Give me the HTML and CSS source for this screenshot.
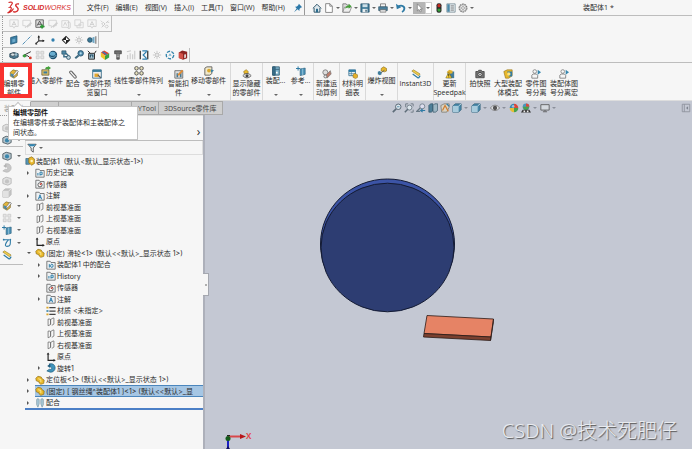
FILE: index.html
```
<!DOCTYPE html>
<html lang="zh-CN">

<head>
    <meta charset="UTF-8">
    <meta name="viewport" content="width=device-width, initial-scale=1.0">
    <title>装配体1 - SOLIDWORKS</title>

    <link rel="stylesheet" href="styles.css">
</head>

<body>

    <!-- icon sprite -->
    <svg class="sprite" xmlns="http://www.w3.org/2000/svg">
        <symbol id="home" viewBox="0 0 12 12"><path d="M1 6.500 6 1.500l5 5M2.500 6v5h7V6" fill="#dce8ee" stroke="#34586c" stroke-width="1.200"/><path d="M4.800 7h2.400v4H4.800z" fill="#2c6d8e"/></symbol>
        <symbol id="new" viewBox="0 0 12 12"><path d="M2 .8h5l3 3v7.500H2z" fill="#fff" stroke="#777"/><path d="M7 .8v3h3" fill="none" stroke="#777"/></symbol>
        <symbol id="open" viewBox="0 0 12 12"><path d="M1 1h4l1 1.500h3V11H1z" fill="#ddd" stroke="#777"/><path d="M3 5h8.500L9 11H1z" fill="#eee" stroke="#777" stroke-width=".8"/><path d="M4 7c0-3 2-4 4-4V1l3.500 3L8 7V5C6 5 5 6 4 7z" fill="#43a036"/></symbol>
        <symbol id="save" viewBox="0 0 12 12"><path d="M1 1h10v10H1z" fill="#3d7896" stroke="#1f4a60" stroke-width=".8"/><path d="M3 1.500h6v3.500H3z" fill="#cfe0e8"/><path d="M3 7h6v4H3z" fill="#e8eef0"/><path d="M6.500 8h1.500v2.500H6.500z" fill="#264d62"/></symbol>
        <symbol id="print" viewBox="0 0 12 12"><path d="M3 1h6v4H3z" fill="#f3f3f3" stroke="#555" stroke-width=".8"/><path d="M.8 4.500h10.400v4.500H.8z" fill="#4a7f9b" stroke="#31566a" stroke-width=".8"/><path d="M2.500 8h7v3h-7z" fill="#e6e6e6" stroke="#555" stroke-width=".7"/></symbol>
        <symbol id="undo" viewBox="0 0 12 12"><path d="M2.500 4.200C7 2 10.500 4 10 7c-.2 1.800-1.200 3-2.800 3.800" fill="none" stroke="#2f7ba5" stroke-width="2.200"/><path d="M0 1l1 6.500L6.200 5z" fill="#2f7ba5"/></symbol>
        <symbol id="cursor" viewBox="0 0 12 12"><path d="M4 1v8.500l2-1.800 1.300 3 1.500-.7-1.300-2.800H10z" fill="#fff" stroke="#666" stroke-width=".7"/></symbol>
        <symbol id="traffic" viewBox="0 0 12 12"><rect x="3" y=".3" width="6" height="11.400" rx="2.500" fill="#2d2d2d"/><circle cx="6" cy="3.200" r="1.900" fill="#c92a20"/><circle cx="6" cy="8.500" r="1.900" fill="#32a138"/></symbol>
        <symbol id="list" viewBox="0 0 12 12"><path d="M1 1h10v10H1z" fill="#e7eef2" stroke="#627784" stroke-width=".8"/><path d="M1.500 1.500h3v9h-3z" fill="#4a87a6"/><path d="M5.500 3.500h4M5.500 6h4M5.500 8.500h4" stroke="#555" stroke-width=".9"/></symbol>
        <symbol id="gear" viewBox="0 0 12 12"><circle cx="6" cy="6" r="4.700" fill="none" stroke="#777" stroke-width="1.300" stroke-dasharray="2.200 .7"/><circle cx="6" cy="6" r="3.700" fill="#eee" stroke="#888" stroke-width=".6"/><circle cx="6" cy="6" r="1.700" fill="#fff" stroke="#777" stroke-width=".8"/></symbol>
        <symbol id="pin" viewBox="0 0 12 12"><path d="M7 .8 11 5 9.500 5.500 7.800 7.300 7.600 9.500 5.600 7.500 1.200 11 4.400 6.500 2.500 4.500l2.200-.2L6.500 2.500z" fill="#2c78a8"/></symbol>

        <symbol id="note" viewBox="0 0 12 12"><path d="M1 1h10v8H7l-1 2-1-2H1z" fill="none" stroke="#999"/><path d="M3.500 8 6 3l2.500 5M4.500 6.500h3" fill="none" stroke="#888"/></symbol>
        <symbol id="note-pen" viewBox="0 0 12 12"><path d="M1 1.500h9V8H6l-2 2.500V8H1z" fill="none" stroke="#999"/><path d="M5 9l5.500-5.500L12 5 6.500 10.500z" fill="#999"/></symbol>
        <symbol id="note-add" viewBox="0 0 12 12"><path d="M1 1h9v9H1z" fill="#ddd" stroke="#555"/><path d="M2.500 8 5.500 2.500l3 5.500M3.500 6.300h3.800" fill="none" stroke="#444"/><path d="M8.500 6.500v5M6 9h5.500" stroke="#2d9b35" stroke-width="2"/></symbol>
        <symbol id="note-clip" viewBox="0 0 12 12"><path d="M1 2h8v8H1z" fill="none" stroke="#999"/><path d="M3 8l2-4 2 4M8 5c0-2 3-2 3 0v5c0 2-3 2-3 0" fill="none" stroke="#888"/></symbol>
        <symbol id="note-stack" viewBox="0 0 12 12"><path d="M1 1h7v7H1zM3.500 8v2.500H11V4H8" fill="none" stroke="#999"/><circle cx="7" cy="7" r="2" fill="#aaa"/></symbol>
        <symbol id="link" viewBox="0 0 12 12"><path d="M5 7 2 10M7 5l3-3M2 6l2-2 2 2-2 2zM6 9l2-2 2 2-2 2zM1 2l2 2M9 4h2" fill="none" stroke="#888" stroke-width="1.100"/></symbol>
        <symbol id="plane-blue" viewBox="0 0 12 12"><path d="M2 3 9.500 1v8L2 11z" fill="#3c7fa6" stroke="#245a7a"/><path d="M4 5l3.500-.8v4L4 9z" fill="#6da9c8"/></symbol>
        <symbol id="axis" viewBox="0 0 12 12"><path d="M.8 11.200 11.200.8" stroke="#337ca8" stroke-dasharray="5 1 1 1"/></symbol>
        <symbol id="coord" viewBox="0 0 12 12"><path d="M4.500 1v6L1 10.500M4.500 7H11" fill="none" stroke="#333" stroke-width="1.300"/><path d="M3 3l1.500-2.500L6 3zM9 5.500 11.500 7 9 8.500zM.5 9l0 2.500H3z" fill="#222"/></symbol>
        <symbol id="dot" viewBox="0 0 12 12"><circle cx="6" cy="6" r="2" fill="#2f7fae"/></symbol>
        <symbol id="mass" viewBox="0 0 12 12"><path d="M6 .8 11.200 6 6 11.200.8 6z" fill="#222"/><path d="M6 6V2.500L9.500 6zM6 6v3.500L2.500 6z" fill="#fff"/></symbol>
        <symbol id="star" viewBox="0 0 12 12"><path d="M6 1v10M1 6h10M2.500 2.500l7 7M9.500 2.500l-7 7" stroke="#888" stroke-width="1.200"/><circle cx="6" cy="6" r="2" fill="#ccc" stroke="#888"/></symbol>
        <symbol id="mirror" viewBox="0 0 12 12"><circle cx="3.500" cy="6" r="2.800" fill="#3a7998" stroke="#264e64"/><path d="M6.500 3 9 2v8L6.500 9z" fill="#6da6c4"/><path d="M10 1.500h1.200v9H10z" fill="#666"/></symbol>
        <symbol id="cyl" viewBox="0 0 12 12"><path d="M1 4.500 6 3l5 1.500v4L6 10.500 1 8.500z" fill="#4c7b92" stroke="#2d4b5b"/><ellipse cx="4.500" cy="5.500" rx="2.500" ry="1.800" fill="#d5e2e8" stroke="#333" stroke-width=".6"/><circle cx="8.500" cy="5.500" r="1.500" fill="#9fc0ce"/></symbol>
        <symbol id="branch" viewBox="0 0 12 12"><path d="M1 7 10.500 2M1 7h6l3 3" fill="none" stroke="#333" stroke-width="1.200"/><circle cx="3" cy="7" r="2" fill="#38a03a"/><circle cx="10" cy="9.500" r="1.700" fill="#cf3b2c"/></symbol>
        <symbol id="grid" viewBox="0 0 12 12"><path d="M1.500 1.500H5V5H1.500zM7 1.500h3.500V5H7zM1.500 7H5v3.500H1.500zM7 7h3.500v3.500H7z" fill="#ccc" stroke="#888"/></symbol>
        <symbol id="sphere" viewBox="0 0 12 12"><circle cx="6" cy="6" r="5" fill="#1e4f6e"/><ellipse cx="5.500" cy="4.500" rx="3.500" ry="2.500" fill="#69adcf"/><path d="M2 8c3 2 6 1 8-2" stroke="#8cc4dc" fill="none"/></symbol>
        <symbol id="pipe" viewBox="0 0 12 12"><path d="M1 1h5v4H1z" fill="#4d88a6" stroke="#2b5266" stroke-width=".8"/><path d="M6 4l4 4M3.500 5v3H8" fill="none" stroke="#3c6e88" stroke-width="1.800"/><circle cx="9" cy="9" r="2.300" fill="#bcd4df" stroke="#2b5266"/></symbol>
        <symbol id="wrench" viewBox="0 0 12 12"><circle cx="8" cy="4" r="3.300" fill="#4d8bae" stroke="#244e68"/><circle cx="8" cy="4" r="1.300" fill="#b9dbe9"/><path d="M5.500 6.500 1.500 10" stroke="#406b82" stroke-width="2.500"/></symbol>
        <symbol id="sketch" viewBox="0 0 12 12"><path d="M2 4h7v7H2zM1 1l3 3M9 4l2-3" fill="#aac5d2" stroke="#333" stroke-width="1.200"/><path d="M4 9V6h3v3" fill="none" stroke="#234f66" stroke-width="1.300"/></symbol>
        <symbol id="rainbow" viewBox="0 0 12 12"><path d="M1 3 5 .5 11 4 6 7z" fill="#d94733"/><path d="M1 3l5 4v5L1 8z" fill="#efc52e"/><path d="M6 7l5-3v5l-5 3z" fill="#39a046"/><path d="M3 2l5 3.500" stroke="#2f79c7" stroke-width="1.500"/></symbol>
        <symbol id="bolt" viewBox="0 0 12 12"><path d="M2 1h8v3.500H7.500V11h-3V4.500H2z" fill="#707070" stroke="#333" stroke-width=".8"/><path d="M4.500 6h3M4.500 8h3" stroke="#ddd" stroke-width=".8"/></symbol>
        <symbol id="bars" viewBox="0 0 12 12"><path d="M2 6v5M5 4v7M8 5v6M10.500 1v10M1 2l5-1" stroke="#888" stroke-width="1.300"/></symbol>
        <symbol id="measure" viewBox="0 0 12 12"><path d="M1.500 1v10M10.500 1v10" stroke="#333" stroke-width="1.500"/><path d="M4 1h6M4 11h6M9 2 5 6l4 4" fill="none" stroke="#2f7fae" stroke-width="1.500"/></symbol>
        <symbol id="cycle" viewBox="0 0 12 12"><circle cx="6" cy="6" r="4.500" fill="none" stroke="#3586ad" stroke-width="1.600" stroke-dasharray="4 1.600"/><path d="M4 7l2-3 2 3z" fill="#78b4ce"/></symbol>
        <symbol id="redbox" viewBox="0 0 12 12"><path d="M1 3l4-2.500L11 2v8l-5 1.800L1 9.500z" fill="#8d2523"/><path d="M1 3l5 1.500V11L1 9.500z" fill="#d35047"/><path d="M7.500 5.500 9.500 5v4l-2 .8z" fill="#e8e8e8"/></symbol>

        <symbol id="part" viewBox="0 0 12 12"><path d="M1 4 3.500 1.500l4 1 1 2 2.500 1.500-.5 4L7 11.200 5 9.500 4.500 8 1.500 7z" fill="#e9b92c" stroke="#8c6b12" stroke-width=".8"/><path d="M4 4.500l3 1v3" fill="none" stroke="#fff0a6"/></symbol>
        <symbol id="edit-part" viewBox="0 0 12 12"><path d="M1.500 4 5 1l5 1.500V8L6 11 1.500 8.500z" fill="#e4b63a" stroke="#7a6830" stroke-width=".8"/><path d="M2 5l4 1.500v4L2 8.300z" fill="#4b8eae"/><path d="M5 7 9.500 1.500 11.300 3 7 8l-2.500.8z" fill="#f1f1f1" stroke="#555" stroke-width=".7"/></symbol>
        <symbol id="asm" viewBox="0 0 12 12"><path d="M1 3h4.500v7H1z" fill="#5795b4" stroke="#28556d" stroke-width=".7"/><path d="M4.500 2.500 8 1l3.300 2.500V9L8 11 4.500 8z" fill="#e8b72c" stroke="#89681a" stroke-width=".8"/><circle cx="8" cy="6" r="1.500" fill="#fff3bd"/></symbol>
        <symbol id="insert" viewBox="0 0 12 12"><path d="M1 4.500h8.500V11H1z" fill="#dec068" stroke="#554c2e" stroke-width=".8"/><path d="M3 6.500h4.500V9H3z" fill="#3d7d9d"/><path d="M5 4c0-2 1.500-3 3.500-3V0L12 2.300 8.500 5V3.500z" fill="#45a23c"/></symbol>
        <symbol id="clip" viewBox="0 0 12 12"><path d="M10 9 4.500 2.800C3.300 1.400 1 3.400 2.300 4.800L7.500 10.500c1.200 1.400 3.300-.4 2-1.800L5 3.800" fill="none" stroke="#666" stroke-width="1.300"/></symbol>
        <symbol id="preview" viewBox="0 0 12 12"><path d="M.8 1h10.400v10H.8z" fill="#eee" stroke="#326985"/><path d="M1 1h10v2.500H1z" fill="#387a9a"/><path d="M3 5.500h5v4H3z" fill="#e1a52c"/><path d="M7 7l3.500 3.500" stroke="#555" stroke-width="1.300"/></symbol>
        <symbol id="pattern" viewBox="0 0 12 12"><path d="M1 1.500l2-1 2 1V4L3 5 1 4zM7 1.500l2-1 2 1V4L9 5 7 4zM1 7.500l2-1 2 1V10l-2 1-2-1zM7 7.500l2-1 2 1V10l-2 1-2-1z" fill="#e5dfbc" stroke="#4a4a4a"/></symbol>
        <symbol id="smart" viewBox="0 0 12 12"><path d="M1 2h9.500v9H1z" fill="#ddd" stroke="#666"/><path d="M3 5h2v5H3zM7 4h2v6H7z" fill="#467991"/><path d="M4 7 9.500 1 11 2.500 6 8z" fill="#e28b31"/></symbol>
        <symbol id="move" viewBox="0 0 12 12"><path d="M1 2.500 3.500 1h6v8L7 11H1z" fill="#f1e9cb" stroke="#555"/><circle cx="6" cy="5.500" r="2.300" fill="#dba930"/><path d="M8 4l4 1.500L8.500 8z" fill="#3c82a6"/></symbol>
        <symbol id="hide" viewBox="0 0 12 12"><path d="M2 3 5 .8 7.500 3 7 6H3z" fill="#e9b92c" stroke="#8c6b12" stroke-width=".7"/><path d="M1 8c3-3.500 7-3.500 10 0-3 3.500-7 3.500-10 0z" fill="#ddd" stroke="#555"/><circle cx="6" cy="8" r="1.800" fill="#444"/></symbol>
        <symbol id="feature" viewBox="0 0 12 12"><path d="M2 1h8v10H2z" fill="#7cb2cb" stroke="#315d73"/><path d="M2 1h3v10H2zM5 4h5" fill="#376f8b" stroke="#315d73"/><path d="M6 7h2v2H6z" fill="#fff"/></symbol>
        <symbol id="ref" viewBox="0 0 12 12"><path d="M5 3.500 11 2.500v7.500l-6 1.500z" fill="#4b92b8" stroke="#2a617f" stroke-width=".8"/><path d="M0 3h5M2.500.5v5" stroke="#2e7ba4" stroke-width="1.200"/><path d="M8 3v8" stroke="#9dc6da"/></symbol>
        <symbol id="motion" viewBox="0 0 12 12"><circle cx="4" cy="4" r="3" fill="#ddd" stroke="#777"/><path d="M5 7l5-5 1 4-5 5z" fill="#bb7c6c" stroke="#777" stroke-width=".8"/><circle cx="4" cy="9" r="1.700" fill="#eee" stroke="#666"/></symbol>
        <symbol id="bom" viewBox="0 0 12 12"><path d="M1 1h8v7H1z" fill="#e6eef2" stroke="#387695"/><path d="M1 1h8v2.500H1z" fill="#2b7ca8"/><path d="M1 5.500h8M4 3v5" stroke="#387695" stroke-width=".7"/><path d="M6 7 8 5l3.500 2v3L9 11.500 6 10z" fill="#e4b02b" stroke="#82651b" stroke-width=".6"/></symbol>
        <symbol id="explode" viewBox="0 0 12 12"><path d="M5 3 8 1l3.500 2v3L9 7 5 6z" fill="#e9b92c" stroke="#806517" stroke-width=".7"/><path d="M1 7l2-1 2.500 1.500V10L3.500 11 1 10z" fill="#407d9c"/><path d="M5 8l4-3" stroke="#555"/></symbol>
        <symbol id="ruler" viewBox="0 0 12 12"><path d="M1 2.500 3 1l8 5-2 2z" fill="#f0cf48" stroke="#8d742a" stroke-width=".7"/><path d="M2 6l7 5M9 11l2-3" stroke="#2e7ba4" stroke-width="1.500"/></symbol>
        <symbol id="warn" viewBox="0 0 12 12"><path d="M3 3h8v8H3z" fill="#437c9a"/><path d="M5 1l4 1v3L5 6 2 4z" fill="#e3b22e"/><path d="M4.500 4 8 10.800H1z" fill="#ffd531" stroke="#665414" stroke-width=".6"/><path d="M4.500 6v2.500M4.500 9v1" stroke="#222"/></symbol>
        <symbol id="camera" viewBox="0 0 12 12"><path d="M1 3h2.500l1-1.500h3l1 1.500H11v7.500H1z" fill="#777" stroke="#444"/><circle cx="6" cy="6.500" r="2.500" fill="#eee" stroke="#333"/><circle cx="6" cy="6.500" r="1" fill="#555"/></symbol>
        <symbol id="big-asm" viewBox="0 0 12 12"><path d="M1 3 5 1h6v7l-4 3H3z" fill="#e9b92c" stroke="#8c6b12" stroke-width=".7"/><path d="M5 3h6v6H7z" fill="#347ca0"/><circle cx="7" cy="6" r="2" fill="#ffe37c"/></symbol>
        <symbol id="person" viewBox="0 0 12 12"><circle cx="4.500" cy="3" r="2.200" fill="#f6f6f6" stroke="#777" stroke-width=".9"/><path d="M1 11V7.500l1.500-1.500h4L8 7.500V11z" fill="#f6f6f6" stroke="#777"/><path d="M8 1l4 3-4 3z" fill="#3586ad"/></symbol>

        <symbol id="lens" viewBox="0 0 12 12"><circle cx="7.500" cy="4.500" r="3.300" fill="#dce6ec" stroke="#5d6c78" stroke-width="1.200"/><path d="M5 7 1 11" stroke="#5d6c78" stroke-width="2"/><path d="M6 4.500h3" stroke="#4682a0"/></symbol>
        <symbol id="lens-area" viewBox="0 0 12 12"><path d="M2 5V1h3M8 1h3v3M11 8v3H8" fill="none" stroke="#66727d"/><circle cx="6.500" cy="5.500" r="3" fill="#dce6ec" stroke="#67747f"/><path d="M4.500 7.500 1 11" stroke="#5d6c78" stroke-width="1.800"/></symbol>
        <symbol id="prev-view" viewBox="0 0 12 12"><circle cx="7.500" cy="4" r="3" fill="#dde" stroke="#6b7a86"/><path d="M5 6 1 10h4" fill="none" stroke="#687885" stroke-width="1.500"/><path d="M11 9H6M8 7 5.500 9 8 11" fill="none" stroke="#2f7ba5" stroke-width="1.300"/></symbol>
        <symbol id="section" viewBox="0 0 12 12"><path d="M1 3l2-2h3v8l-2 2H1z" fill="#4d7f98" stroke="#345365" stroke-width=".8"/><path d="M6 3l2-2h3.500v8L9 11H6z" fill="#9cb6c3" stroke="#345365" stroke-width=".8"/></symbol>
        <symbol id="annot" viewBox="0 0 12 12"><path d="M1 3l4-2h6v4L8 11H2z" fill="#d8d4c5" stroke="#6f6c62" stroke-width=".8"/><path d="M3 9 6 3l4 7" fill="none" stroke="#cf7f32" stroke-width="1.500"/><path d="M8 1l3 3" stroke="#2f7ba5" stroke-width="1.500"/></symbol>
        <symbol id="cube" viewBox="0 0 12 12"><path d="M1 3.500 4 1h7v7l-3 3H1z" fill="#4788a9" stroke="#2d5a72" stroke-width=".8"/><path d="M1 3.500h7V11H1z" fill="#a8cbdc"/><path d="M8 3.500 11 1" stroke="#d6e7ef"/></symbol>
        <symbol id="eye" viewBox="0 0 12 12"><path d="M.5 6c3-4.500 8-4.500 11 0-3 4-8 4-11 0z" fill="#e3e5e8" stroke="#777"/><circle cx="6" cy="6" r="2.600" fill="#555"/></symbol>
        <symbol id="ball" viewBox="0 0 12 12"><path d="M6 .8A5.200 5.200 0 0 0 .8 6H6z" fill="#3987b0"/><path d="M6 .8A5.200 5.200 0 0 1 11.200 6H6z" fill="#d7483a"/><path d="M.8 6A5.200 5.200 0 0 0 6 11.200V6z" fill="#e6bd35"/><path d="M11.200 6A5.200 5.200 0 0 1 6 11.200V6z" fill="#48a14b"/><circle cx="5" cy="4" r="1.600" fill="#fff" fill-opacity=".5"/></symbol>
        <symbol id="scene" viewBox="0 0 12 12"><circle cx="6" cy="4.500" r="4" fill="#4a97bd"/><path d="M6 .5a4 4 0 0 1 4 4H6z" fill="#d94a3a"/><path d="M2 4.500h8L8 8H4z" fill="#50a04a"/><path d="M0 11.500 2 8h8l2 3.500z" fill="#333"/><path d="M3 9h2v2H3zM7 9h2v2H7z" fill="#eee"/></symbol>
        <symbol id="monitor" viewBox="0 0 12 12"><path d="M1 2h10v6.500H1z" fill="#d5d9df" stroke="#555"/><path d="M6 8.500V10M3.500 10.500h5" stroke="#555"/></symbol>
        <symbol id="dock" viewBox="0 0 12 12"><path d="M1.500 1.500h9v9h-9zM4 1.500v9" fill="none" stroke="#8b909b"/><path d="M8.500 4v4L6 6z" fill="#7c828e"/></symbol>

        <symbol id="funnel" viewBox="0 0 12 12"><path d="M1 1.500h10L7.500 6v5L5 9V6z" fill="#edf3f6" stroke="#444"/><path d="M1.500 1.500h9L8.500 4h-5z" fill="#2f86b3"/></symbol>
        <symbol id="folder-h" viewBox="0 0 12 12"><path d="M1 1.500h4L6 3h5v8H1z" fill="#eef1f3" stroke="#666"/><path d="M3.500 9V6M6 9V5h2.500v3H6" fill="none" stroke="#2e7fa9" stroke-width="1.200"/></symbol>
        <symbol id="folder-s" viewBox="0 0 12 12"><path d="M1 1.500h4L6 3h5v8H1z" fill="#eef1f3" stroke="#666"/><circle cx="6" cy="7" r="2.500" fill="#fff" stroke="#444"/><path d="M6 7l2-2" stroke="#d33a2f" stroke-width="1.500"/></symbol>
        <symbol id="folder-a" viewBox="0 0 12 12"><path d="M1 1.500h4L6 3h5v8H1z" fill="#eef1f3" stroke="#666"/><path d="M4 10l2-5.500L8 10M4.800 8h2.400" fill="none" stroke="#2377a8" stroke-width="1.100"/></symbol>
        <symbol id="folder-m" viewBox="0 0 12 12"><path d="M1 1.500h4L6 3h5v8H1z" fill="#eef1f3" stroke="#666"/><path d="M4 5v4M7 5c2 0 2 4 0 4S5 5 7 5z" fill="none" stroke="#2e7fa9" stroke-width="1.200"/></symbol>
        <symbol id="plane" viewBox="0 0 12 12"><path d="M5 2.500H2.500v8l3-1.500V2.500M5.500 9V3l3-1.800h1V8.500L7 10" fill="none" stroke="#666" stroke-width=".9"/></symbol>
        <symbol id="origin" viewBox="0 0 12 12"><path d="M2.500 2v8H10" fill="none" stroke="#222" stroke-width="1.400"/><path d="M.8 3 2.500.5 4.200 3zM9 8.300l2.800 1.700L9 11.700z" fill="#222"/></symbol>
        <symbol id="material" viewBox="0 0 12 12"><path d="M4 2h7.500M4 6h7.500M4 10h7.500" stroke="#444" stroke-width="1.500"/><path d="M.5 1h2.500v2H.5zM.5 9h2.500v2H.5z" fill="#dba62b"/><path d="M.5 5h2.500v2H.5z" fill="#3a84a8"/></symbol>
        <symbol id="revolve" viewBox="0 0 12 12"><path d="M4 1c5-1 7 2 7 5s-3 5.500-6 5L1 9.500l3-2c3 1 4-2 1-3z" fill="#3f93bb" stroke="#235d7d" stroke-width=".8"/><path d="M1.500 3.500 5 1v5z" fill="#215d7f"/></symbol>
        <symbol id="mates" viewBox="0 0 12 12"><path d="M2 2c0-1.500 3-1.500 3 0v5L3.500 11 2 8zM7 2c0-1.500 3-1.500 3 0v6l-1.500 3L7 7z" fill="#a9c9d8" stroke="#7995a3" stroke-width=".8"/></symbol>
        <symbol id="solid" viewBox="0 0 12 12"><path d="M1 3.500 5 1.500l6 1.500v6l-4 2-6-2z" fill="#b9c7cf" stroke="#46545c"/><circle cx="6" cy="6.500" r="2.500" fill="#3b87ad"/></symbol>
        <symbol id="spline" viewBox="0 0 12 12"><path d="M2 2h6c-3 3-6 8-2 8 5 0 4-4 4-8" fill="none" stroke="#2f7ba5" stroke-width="1.300"/><circle cx="2" cy="2" r="1" fill="#2f7ba5"/><circle cx="10" cy="2" r="1" fill="#2f7ba5"/></symbol>
    </svg>

    <header class="titlebar">
        <div class="brand">
            <svg class="brand-mark" viewBox="0 0 26 26" aria-hidden="true">
                <path d="M3 3c6-2 9 0 7 3L6 12M3 13c7-2 8 2 1 9L1 24M1 24c6-1 10-5 12-9" fill="none" stroke="#d52b2b" stroke-width="2.400"/>
                <path d="M24 6c-5-1-8 1-6 4s6 4 4 8-7 5-10 3" fill="none" stroke="#d52b2b" stroke-width="2.800"/>
            </svg>
            <span class="brand-name"><b>SOLID</b>WORKS</span>
        </div>
        <nav class="menu">
            <button>文件(F)</button>
            <button>编辑(E)</button>
            <button>视图(V)</button>
            <button>插入(I)</button>
            <button>工具(T)</button>
            <button>窗口(W)</button>
            <button>帮助(H)</button>
            <button class="tool" aria-label="固定"><svg><use href="#pin"/></svg></button>
        </nav>
        <div class="quick">
            <button class="tool" aria-label="主页"><svg><use href="#home"/></svg></button>
            <button class="tool" aria-label="新建"><svg><use href="#new"/></svg></button>
            <button class="drop" aria-label="新建选项"></button>
            <button class="tool" aria-label="打开"><svg><use href="#open"/></svg></button>
            <button class="drop" aria-label="打开选项"></button>
            <button class="tool" aria-label="保存"><svg><use href="#save"/></svg></button>
            <button class="drop" aria-label="保存选项"></button>
            <button class="tool" aria-label="打印"><svg><use href="#print"/></svg></button>
            <button class="drop" aria-label="打印选项"></button>
            <button class="tool" aria-label="撤销"><svg><use href="#undo"/></svg></button>
            <button class="drop" aria-label="撤销选项"></button>
            <button class="tool pressed" aria-label="选择"><svg><use href="#cursor"/></svg></button>
            <button class="drop framed" aria-label="选择选项"></button>
            <button class="tool" aria-label="重建模型"><svg><use href="#traffic"/></svg></button>
            <button class="tool" aria-label="文件属性"><svg><use href="#list"/></svg></button>
            <button class="tool" aria-label="选项"><svg><use href="#gear"/></svg></button>
            <button class="drop" aria-label="更多选项"></button>
        </div>
        <h1 class="doc-title">装配体1 *</h1>
    </header>

    <div class="toolbars">
        <div class="toolbar">
            <button class="tool faded" aria-label="注解"><svg><use href="#note"/></svg></button>
            <button class="tool faded" aria-label="编辑注解"><svg><use href="#note-pen"/></svg></button>
            <button class="tool" aria-label="添加注解"><svg><use href="#note-add"/></svg></button>
            <button class="tool faded" aria-label="附加注解"><svg><use href="#note-pen"/></svg></button>
            <button class="tool faded" aria-label="附件"><svg><use href="#note-clip"/></svg></button>
            <button class="tool faded" aria-label="注解组"><svg><use href="#note-stack"/></svg></button>
            <button class="tool faded" aria-label="注解框"><svg><use href="#note"/></svg></button>
            <button class="tool faded" aria-label="链接"><svg><use href="#link"/></svg></button>
        </div>
        <div class="toolbar">
            <button class="tool" aria-label="基准面"><svg><use href="#plane-blue"/></svg></button>
            <button class="tool" aria-label="基准轴"><svg><use href="#axis"/></svg></button>
            <button class="tool" aria-label="坐标系"><svg><use href="#coord"/></svg></button>
            <button class="tool" aria-label="点"><svg><use href="#dot"/></svg></button>
            <button class="tool" aria-label="质心"><svg><use href="#mass"/></svg></button>
            <button class="tool faded" aria-label="边界框"><svg><use href="#star"/></svg></button>
            <button class="tool" aria-label="配合参考"><svg><use href="#mirror"/></svg></button>
        </div>
        <div class="toolbar">
            <button class="tool" aria-label="干涉检查"><svg><use href="#cyl"/></svg></button>
            <button class="tool" aria-label="间隙验证"><svg><use href="#branch"/></svg></button>
            <button class="tool faded" aria-label="孔对齐"><svg><use href="#grid"/></svg></button>
            <button class="tool" aria-label="质量属性"><svg><use href="#sphere"/></svg></button>
            <button class="tool" aria-label="剖面属性"><svg><use href="#pipe"/></svg></button>
            <button class="tool" aria-label="传感器"><svg><use href="#wrench"/></svg></button>
            <button class="tool" aria-label="草图"><svg><use href="#sketch"/></svg></button>
            <button class="tool" aria-label="曲率"><svg><use href="#rainbow"/></svg></button>
            <button class="tool" aria-label="螺栓"><svg><use href="#bolt"/></svg></button>
            <button class="tool faded" aria-label="统计"><svg><use href="#bars"/></svg></button>
            <button class="tool" aria-label="测量"><svg><use href="#measure"/></svg></button>
            <button class="tool faded" aria-label="对称检查"><svg><use href="#star"/></svg></button>
            <button class="tool" aria-label="比较文档"><svg><use href="#cycle"/></svg></button>
            <button class="tool" aria-label="检查"><svg><use href="#redbox"/></svg></button>
        </div>
    </div>

    <div class="ribbon">
        <div class="group first">
            <button class="cmd active"><svg><use href="#edit-part"/></svg><span>编辑零<br>部件</span></button>
            <button class="cmd w-35 menu-cmd"><svg><use href="#insert"/></svg><span>插入零部件</span><i class="caret"></i></button>
            <button class="cmd w-20"><svg><use href="#clip"/></svg><span>配合</span></button>
            <button class="cmd w-28"><svg><use href="#preview"/></svg><span>零部件预<br>览窗口</span></button>
            <button class="cmd w-55 menu-cmd"><svg><use href="#pattern"/></svg><span>线性零部件阵列</span><i class="caret"></i></button>
            <button class="cmd w-25"><svg><use href="#smart"/></svg><span>智能扣<br>件</span></button>
            <button class="cmd w-35 menu-cmd"><svg><use href="#move"/></svg><span>移动零部件</span><i class="caret"></i></button>
        </div>
        <div class="group">
            <button class="cmd w-31"><svg><use href="#hide"/></svg><span>显示隐藏<br>的零部件</span></button>
        </div>
        <div class="group">
            <button class="cmd w-25 menu-cmd"><svg><use href="#feature"/></svg><span>装配...</span><i class="caret"></i></button>
            <button class="cmd w-25 menu-cmd"><svg><use href="#ref"/></svg><span>参考...</span><i class="caret"></i></button>
        </div>
        <div class="group">
            <button class="cmd w-25"><svg><use href="#motion"/></svg><span>新建运<br>动算例</span></button>
        </div>
        <div class="group">
            <button class="cmd w-25"><svg><use href="#bom"/></svg><span>材料明<br>细表</span></button>
        </div>
        <div class="group">
            <button class="cmd w-31 menu-cmd"><svg><use href="#explode"/></svg><span>爆炸视图</span><i class="caret"></i></button>
        </div>
        <div class="group">
            <button class="cmd w-35"><svg><use href="#ruler"/></svg><span>Instant3D</span></button>
        </div>
        <div class="group">
            <button class="cmd w-31"><svg><use href="#warn"/></svg><span>更新<br>Speedpak</span></button>
        </div>
        <div class="group last">
            <button class="cmd w-28"><svg><use href="#camera"/></svg><span>拍快照</span></button>
            <button class="cmd w-28"><svg><use href="#big-asm"/></svg><span>大型装配<br>体模式</span></button>
            <button class="cmd w-28"><svg><use href="#person"/></svg><span>零件图<br>号分离</span></button>
            <button class="cmd w-28"><svg><use href="#person"/></svg><span>装配体图<br>号分离宏</span></button>
        </div>

        <div class="tooltip" role="tooltip">
            <strong>编辑零部件</strong>
            <p>在编辑零件或子装配体和主装配体之间状态。</p>
        </div>
    </div>

    <main class="workspace">
        <div class="topbar">
            <nav class="tabs">
                <button class="tab current w-31">装配体</button>
                <button class="tab w-28" aria-label="布局"></button>
                <button class="tab w-73" aria-label="草图"></button>
                <button class="tab">XYTool</button>
                <button class="tab wide">3DSource零件库</button>
            </nav>
            <div class="hud">
                <button class="tool" aria-label="整屏显示全图"><svg><use href="#lens"/></svg></button>
                <button class="tool" aria-label="局部放大"><svg><use href="#lens-area"/></svg></button>
                <button class="tool" aria-label="上一视图"><svg><use href="#prev-view"/></svg></button>
                <button class="tool" aria-label="剖面视图"><svg><use href="#section"/></svg></button>
                <button class="tool" aria-label="动态注解视图"><svg><use href="#annot"/></svg></button>
                <button class="tool" aria-label="视图定向"><svg><use href="#cube"/></svg></button>
                <button class="drop" aria-label="视图定向选项"></button>
                <button class="tool" aria-label="显示样式"><svg><use href="#cube"/></svg></button>
                <button class="drop" aria-label="显示样式选项"></button>
                <button class="tool" aria-label="隐藏所有类型"><svg><use href="#eye"/></svg></button>
                <button class="drop" aria-label="隐藏选项"></button>
                <button class="tool" aria-label="编辑外观"><svg><use href="#ball"/></svg></button>
                <button class="tool" aria-label="应用布景"><svg><use href="#scene"/></svg></button>
                <button class="drop" aria-label="布景选项"></button>
                <button class="tool" aria-label="视图设定"><svg><use href="#monitor"/></svg></button>
                <button class="drop" aria-label="视图设定选项"></button>
            </div>
            <button class="tool dock" aria-label="停靠"><svg><use href="#dock"/></svg></button>
        </div>

        <div class="content">
            <div class="side">
                <div class="side-tools side-top">
                    <button class="tool faded" aria-label="实体"><svg><use href="#solid"/></svg></button>
                    <div class="side-item">
                        <button class="tool" aria-label="视图"><svg><use href="#solid"/></svg></button>
                        <button class="drop" aria-label="视图选项"></button>
                    </div>
                </div>
                <div class="side-tools side-main">
                    <div class="side-item">
                        <button class="tool" aria-label="拉伸"><svg><use href="#solid"/></svg></button>
                        <button class="drop" aria-label="拉伸选项"></button>
                    </div>
                    <button class="tool faded" aria-label="圆角"><svg><use href="#revolve"/></svg></button>
                    <button class="tool faded" aria-label="孔"><svg><use href="#solid"/></svg></button>
                    <button class="tool faded" aria-label="抽壳"><svg><use href="#cube"/></svg></button>
                    <div class="side-item">
                        <button class="tool" aria-label="编辑"><svg><use href="#edit-part"/></svg></button>
                        <button class="drop" aria-label="编辑选项"></button>
                    </div>
                    <div class="side-item">
                        <button class="tool faded" aria-label="阵列"><svg><use href="#grid"/></svg></button>
                        <button class="drop" aria-label="阵列选项"></button>
                    </div>
                    <div class="side-item">
                        <button class="tool" aria-label="参考"><svg><use href="#ref"/></svg></button>
                        <button class="drop" aria-label="参考选项"></button>
                    </div>
                    <div class="side-item">
                        <button class="tool" aria-label="曲线"><svg><use href="#spline"/></svg></button>
                        <button class="drop" aria-label="曲线选项"></button>
                    </div>
                    <button class="tool" aria-label="Instant3D"><svg><use href="#ruler"/></svg></button>
                </div>
            </div>

            <section class="feature-panel">
                <div class="panel-head">
                    <div class="panel-tabs"><i></i><i></i><i></i><i></i></div>
                    <button class="more" aria-label="更多">›</button>
                </div>
                <div class="filter">
                    <button class="tool" aria-label="过滤"><svg><use href="#funnel"/></svg></button>
                    <i class="caret"></i>
                </div>
                <ul class="tree">
                    <li class="row"><svg><use href="#asm"/></svg><span>装配体1&nbsp; (默认&lt;默认_显示状态-1&gt;)</span></li>
                    <li class="row level-1"><button class="twist" aria-label="展开"></button><svg><use href="#folder-h"/></svg><span>历史记录</span></li>
                    <li class="row level-1"><svg><use href="#folder-s"/></svg><span>传感器</span></li>
                    <li class="row level-1"><button class="twist" aria-label="展开"></button><svg><use href="#folder-a"/></svg><span>注解</span></li>
                    <li class="row level-1"><svg><use href="#plane"/></svg><span>前视基准面</span></li>
                    <li class="row level-1"><svg><use href="#plane"/></svg><span>上视基准面</span></li>
                    <li class="row level-1"><svg><use href="#plane"/></svg><span>右视基准面</span></li>
                    <li class="row level-1"><svg><use href="#origin"/></svg><span>原点</span></li>
                    <li class="row level-1"><button class="twist open" aria-label="折叠"></button><svg><use href="#part"/></svg><span>(固定) 滑轮&lt;1&gt; (默认&lt;&lt;默认&gt;_显示状态 1&gt;)</span></li>
                    <li class="row level-2"><button class="twist" aria-label="展开"></button><svg><use href="#folder-m"/></svg><span>装配体1 中的配合</span></li>
                    <li class="row level-2"><button class="twist" aria-label="展开"></button><svg><use href="#folder-h"/></svg><span>History</span></li>
                    <li class="row level-2"><svg><use href="#folder-s"/></svg><span>传感器</span></li>
                    <li class="row level-2"><button class="twist" aria-label="展开"></button><svg><use href="#folder-a"/></svg><span>注解</span></li>
                    <li class="row level-2"><svg><use href="#material"/></svg><span>材质 &lt;未指定&gt;</span></li>
                    <li class="row level-2"><svg><use href="#plane"/></svg><span>前视基准面</span></li>
                    <li class="row level-2"><svg><use href="#plane"/></svg><span>上视基准面</span></li>
                    <li class="row level-2"><svg><use href="#plane"/></svg><span>右视基准面</span></li>
                    <li class="row level-2"><svg><use href="#origin"/></svg><span>原点</span></li>
                    <li class="row level-2"><button class="twist" aria-label="展开"></button><svg><use href="#revolve"/></svg><span>旋转1</span></li>
                    <li class="row level-1"><button class="twist" aria-label="展开"></button><svg><use href="#part"/></svg><span>定位板&lt;1&gt; (默认&lt;&lt;默认&gt;_显示状态 1&gt;)</span></li>
                    <li class="row level-1 selected"><button class="twist" aria-label="展开"></button><svg><use href="#part"/></svg><span>(固定) [ 钢丝绳^装配体1 ]&lt;1&gt; (默认&lt;&lt;默认&gt;_显</span></li>
                    <li class="row level-1"><button class="twist" aria-label="展开"></button><svg><use href="#mates"/></svg><span>配合</span></li>
                </ul>
                <button class="splitter" aria-label="收起面板"></button>
            </section>

            <section class="viewport">
                <svg class="model" viewBox="0 0 487 334" preserveAspectRatio="xMinYMin slice">
                    <!-- pulley -->
                    <ellipse cx="182.500" cy="129" rx="67" ry="65" fill="#3c54a6" stroke="#141b33"/>
                    <ellipse cx="182.500" cy="132.500" rx="66.500" ry="64.300" fill="#2d3d72" stroke="#141b33"/>
                    <!-- plate -->
                    <path d="M222 200.500 288.500 204 286 222 219 218.500z" fill="#e68365" stroke="#2b1a16" stroke-width=".8"/>
                    <path d="M219 218.500 286 222 285.500 225.500 218.500 222z" fill="#7b402f" stroke="#2b1a16" stroke-width=".8"/>
                    <path d="M288.500 204 286 222 285.500 225.500 288.300 208z" fill="#54291f" stroke="#2b1a16" stroke-width=".5"/>
                    <!-- axis triad -->
                    <path d="M23 322v12" stroke="#1a1fc4" stroke-width="2"/>
                    <path d="M21 334l2-3 2 3z" fill="#101060"/>
                    <path d="M23 321.500h14" stroke="#d8484a" stroke-width="2"/>
                    <path d="M35 319l6 2.500-6 2.500z" fill="#b81518"/>
                    <circle cx="23" cy="323.500" r="2.500" fill="#145c1c"/>
                    <path d="M22 320.500h3" stroke="#222"/>
                    <text x="41" y="324" class="axis-x">X</text>
                </svg>
                <p class="watermark">CSDN @技术死肥仔</p>
            </section>
        </div>
    </main>

</body>

</html>
```
FILE: styles.css
```
*,
*::before,
*::after {
    box-sizing: border-box;
}

:root {
    --chrome: #f6f6f6;
    --line: #bdbdbd;
    --canvas: #c4c8d3;
    --text: #2b2b2b;
}

body {
    margin: 0;
    min-height: 100vh;
    display: flex;
    flex-direction: column;
    overflow: hidden;
    background: var(--chrome);
    color: var(--text);
    font-family: "Open Sans", "Noto Sans CJK SC", sans-serif;
    font-size: 7px;
    line-height: 9px;
}

button {
    margin: 0;
    padding: 0;
    border: 0;
    background: none;
    color: inherit;
    font: inherit;
    white-space: nowrap;
}

svg {
    display: block;
    flex: none;
    width: 10px;
    height: 10px;
}

.sprite {
    position: absolute;
    width: 0;
    height: 0;
}

/* shared buttons */
.tool {
    flex: none;
    width: 12px;
    height: 12px;
    display: grid;
    place-items: center;
}

.faded {
    opacity: 0.4;
    filter: grayscale(1);
}

.drop {
    flex: none;
    width: 7px;
    height: 12px;
    display: grid;
    place-items: center;
}

.drop::before,
.caret {
    content: "";
    border: 2px solid transparent;
    border-top-color: #666;
    border-bottom: 0;
}

/* title bar */
.titlebar {
    display: flex;
    align-items: stretch;
    height: 16px;
    border-bottom: 1px solid var(--line);
}

.brand {
    display: flex;
    align-items: center;
    gap: 3px;
    padding: 0 2px 0 7px;
    background: #fff;
    border-right: 1px solid var(--line);
    color: #d52b2b;
}

.brand-mark {
    width: 13px;
    height: 13px;
}

.brand-name {
    font-family: "Liberation Sans", sans-serif;
    font-size: 7px;
    font-style: italic;
}

.menu {
    display: flex;
    align-items: center;
    gap: 7px;
    padding: 0 0 0 13px;
    border-right: 1px solid #999;
}

.quick {
    display: flex;
    align-items: center;
    padding-left: 6px;
}

.quick .drop {
    width: 6px;
}

.pressed {
    background: #b5b5b5;
}

.quick .framed {
    width: 7px;
    margin-right: 1px;
    border: 1px solid #d0d0d0;
    background: #fff;
}

.doc-title {
    margin: 0;
    padding-left: 30px;
    flex: 1;
    align-self: center;
    font-size: 7px;
    font-weight: normal;
    text-align: center;
}

/* small toolbars */
.toolbars {
    display: flex;
    flex-direction: column;
    align-items: flex-start;
    border-bottom: 1px solid var(--line);
}

.toolbar {
    display: flex;
    align-items: center;
    gap: 1px;
    height: 16px;
    padding: 0 0 0 5px;
    margin-left: 2px;
    border: 1px solid var(--line);
    border-top: 0;
    border-left: 1px dotted #999;
}

.toolbar:last-child {
    height: 14px;
    border-bottom: 0;
}

/* ribbon */
.ribbon {
    position: relative;
    display: flex;
    height: 38px;
    border-bottom: 1px solid #ddd;
}

.group {
    display: flex;
    border-right: 1px solid #d9d9d9;
}

.group.first {
    padding-right: 4px;
}

.group.last {
    border-right: 0;
}

.cmd {
    display: flex;
    flex-direction: column;
    align-items: center;
    padding-top: 6px;
    text-align: center;
}

.menu-cmd {
    padding-top: 3px;
}

.menu-cmd .caret {
    margin-top: 9px;
}

/* highlighted command, its frame covers the edge of the next one */
.active {
    z-index: 1;
    width: 32px;
    height: 35px;
    margin-right: -4px;
    padding-right: 4px;
    outline: 4px solid #f8322f;
    outline-offset: -4px;
    background: #fff;
}

.w-20 {
    width: 20px;
}

.w-25 {
    width: 25px;
}

.w-28 {
    width: 28px;
}

.w-31 {
    width: 31px;
}

.w-35 {
    width: 35px;
}

.w-55 {
    width: 55px;
}

.w-73 {
    width: 73px;
}

.tooltip {
    position: absolute;
    top: 43px;
    left: 8px;
    z-index: 2;
    width: 130px;
    padding: 1px 4px;
    border: 1px solid #c4c4c4;
    background: #fff;
    line-height: 10px;
}

.tooltip::before {
    content: "";
    position: absolute;
    top: -4px;
    left: 6px;
    width: 6px;
    height: 6px;
    border: 1px solid #c4c4c4;
    border-right: 0;
    border-bottom: 0;
    background: #fff;
    transform: rotate(45deg);
}

.tooltip strong {
    color: #111;
}

.tooltip p {
    margin: 0;
    width: 116px;
}

/* workspace */
.workspace {
    flex: 1;
    display: flex;
    flex-direction: column;
    background: var(--canvas);
}

.topbar {
    display: flex;
    align-items: center;
    height: 14px;
}

.tabs {
    display: flex;
    height: 14px;
}

.tab {
    padding: 0 2px;
    border: 1px solid #a9a9a9;
    border-left: 0;
    background: #cfcfcf;
    color: #444;
}

.tab.wide {
    padding: 0 5px;
}

.tab.current {
    padding: 0 4px;
    background: var(--chrome);
    border-top-color: var(--chrome);
    border-bottom-color: var(--chrome);
    color: #999;
    text-align: left;
}

.hud {
    display: flex;
    margin-left: 168px;
}

.hud .drop::before {
    border-top-color: #8b909b;
}

.dock {
    margin-left: auto;
}

.content {
    flex: 1;
    display: flex;
}

.side {
    width: 25px;
    background: var(--chrome);
}

.side-tools {
    display: flex;
    flex-direction: column;
    padding-left: 1px;
    width: 23px;
    border-bottom: 1px solid var(--line);
}

.side-top {
    height: 32px;
    padding-top: 6px;
    border-top: 1px dotted #999;
}

.side-main {
    height: 118px;
    padding: 3px 0 3px 1px;
    justify-content: space-between;
}

.side-item {
    display: flex;
    gap: 2px;
}

.feature-panel {
    position: relative;
    width: 180px;
    background: var(--chrome);
    border-right: 2px solid #adb0ba;
}

.panel-head {
    display: flex;
    align-items: flex-end;
    justify-content: space-between;
    height: 26px;
    padding-left: 18px;
    border-top: 1px solid #ddd;
    border-bottom: 1px solid var(--line);
}

.panel-tabs {
    display: flex;
    gap: 1px;
}

.panel-tabs i {
    width: 18px;
    height: 12px;
    background: #c9c9c9;
}

.more {
    width: 9px;
    height: 16px;
    font-size: 12px;
    line-height: 12px;
}

.filter {
    display: flex;
    align-items: center;
    gap: 1px;
    height: 14px;
    border: 1px solid #ddd;
    border-top: 0;
}

.tree {
    margin: 0;
    padding: 0;
    list-style: none;
    border-bottom: 2px solid #4b7fc6;
    font-family: "Inter", "Noto Sans CJK SC", sans-serif;
}

.row {
    position: relative;
    display: flex;
    align-items: center;
    gap: 1px;
    height: 11px;
    overflow: hidden;
    white-space: nowrap;
}

.row:nth-child(odd) {
    height: 12px;
}

.level-1 {
    margin-left: 10px;
}

.level-2 {
    margin-left: 21px;
}

.row:has(.twist) {
    padding-left: 10px;
    margin-left: 0;
}

.level-2:has(.twist) {
    margin-left: 11px;
}

/* arrow sits in the gutter left of the icon */
.twist {
    position: absolute;
    left: 2px;
    border: 2px solid transparent;
    border-left: 2px solid #555;
    border-right: 0;
}

.twist.open {
    border: 2px solid transparent;
    border-top: 2px solid #555;
    border-bottom: 0;
}

.selected {
    background: linear-gradient(#4b86bd, #4b86bd) 10px 0 / 100% 1px no-repeat,
        linear-gradient(#4b86bd, #4b86bd) 10px 100% / 100% 1px no-repeat,
        linear-gradient(#a5c6e4, #a5c6e4) 10px 0 / 100% 100% no-repeat;
}

.splitter {
    position: absolute;
    top: 158px;
    right: -6px;
    width: 6px;
    height: 23px;
    border: 1px solid #a5a8b0;
    border-left: 0;
    background: var(--chrome);
    z-index: 1;
}

.splitter::before {
    content: "";
    display: block;
    width: 2px;
    height: 2px;
    margin: 0 auto;
    border-radius: 50%;
    background: #999;
}

.viewport {
    position: relative;
    flex: 1;
    overflow: hidden;
}

.model {
    position: absolute;
    inset: 0;
    width: 100%;
    height: 100%;
}

.axis-x {
    fill: #e0484c;
    font-size: 8px;
    font-weight: bold;
}

.watermark {
    position: absolute;
    right: 15px;
    bottom: 5px;
    margin: 0;
    color: #e9ebef;
    font-family: "Noto Sans", "Noto Sans CJK SC", sans-serif;
    font-size: 20px;
    font-weight: 300;
    line-height: 26px;
    text-shadow: 1px 1px 1px #555;
}
```
